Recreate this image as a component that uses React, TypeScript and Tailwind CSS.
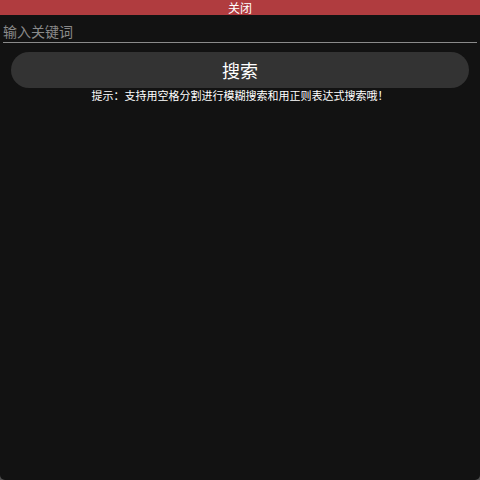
import React, { useState } from 'react';

const font = { fontFamily: '"Noto Sans CJK SC", "Noto Sans", sans-serif' };

export default function App() {
  const [keyword, setKeyword] = useState('');

  return (
    <div className="w-[480px] h-[480px] bg-[#505050]" style={font}>
      <div className="w-full h-full bg-[#121212] rounded-b-[5px] overflow-hidden flex flex-col">
        {/* Close bar */}
        <button className="h-[15px] w-full bg-[#b03c3f] text-white text-[12px] leading-[15px] text-center">
          关闭
        </button>

        {/* Keyword input */}
        <div className="px-[3px] pt-[3px]">
          <input
            value={keyword}
            onChange={(e) => setKeyword(e.target.value)}
            placeholder="输入关键词"
            className="w-full h-[21px] bg-transparent text-[14px] leading-[21px] text-[#cccccc] placeholder-[#8a8a8a] border-b border-[#8a8a8a] outline-none"
          />
        </div>

        {/* Search button */}
        <div className="px-[11px] pt-[9px]">
          <button className="w-full h-[36px] rounded-full bg-[#333333] text-white text-[18px] leading-[36px]">
            搜索
          </button>
        </div>

        <p className="text-center text-white text-[11px] leading-[14px]">
          提示：支持用空格分割进行模糊搜索和用正则表达式搜索哦！
        </p>
      </div>
    </div>
  );
}
